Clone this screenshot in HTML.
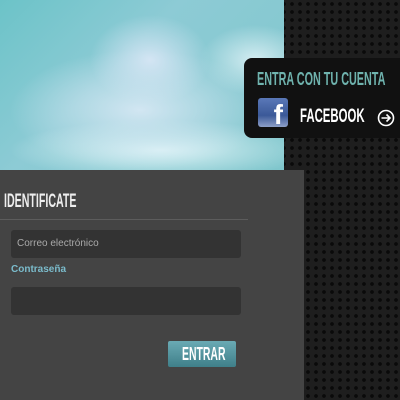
<!DOCTYPE html><html><head><style>
body{margin:0;width:400px;height:400px;overflow:hidden;position:relative;background:#1c1c1c;font-family:"Liberation Sans",sans-serif}
.tex{position:absolute;left:280px;top:0;width:120px;height:400px;background-color:#1e1e1e;background-image:radial-gradient(circle,#0a0a0a 1.6px,transparent 2.2px);background-size:8px 8px}
.sky{position:absolute;left:0;top:0;width:284px;height:170px;background:
radial-gradient(ellipse 60px 45px at 150px 60px,rgba(215,230,245,.95),transparent 100%),
radial-gradient(ellipse 130px 60px at 140px 110px,rgba(210,230,242,1),transparent 100%),
radial-gradient(ellipse 55px 35px at 255px 60px,rgba(220,240,245,.9),transparent 100%),
radial-gradient(ellipse 150px 30px at 160px 150px,rgba(225,245,248,.95),transparent 100%),
linear-gradient(135deg,#6cc3c8 0%,#8dcbd5 40%,#7fc6cc 100%)}
.box{position:absolute;left:244px;top:58px;width:160px;height:80px;background:#111;border-radius:8px 0 0 8px}
.t1{position:absolute;left:257px;top:69px;color:#6fb3ae;font-weight:bold;font-size:18px;transform:scaleX(.6);transform-origin:left;white-space:nowrap}
.fb{position:absolute;left:258px;top:98px;width:30px;height:29px;border-radius:3px;background:linear-gradient(#5a78b8,#3b5998 60%,#8ea0c8);color:#fff;font-weight:bold;font-size:28px;text-align:right;line-height:34px;box-sizing:border-box;padding-right:5px;overflow:hidden}
.t2{position:absolute;left:300px;top:106px;color:#fff;font-weight:bold;font-size:19px;transform:scaleX(.6);transform-origin:left;white-space:nowrap}
.arr{position:absolute;left:377px;top:109px}
.panel{position:absolute;left:0;top:170px;width:304px;height:230px;background:#444}
.h{position:absolute;left:4px;top:191px;color:#eee;font-weight:bold;font-size:19px;transform:scaleX(.56);transform-origin:left;white-space:nowrap}
.line{position:absolute;left:0;top:219px;width:248px;height:1px;background:#5c5c5c}
.in{position:absolute;left:11px;width:230px;height:28px;background:#333;border-radius:3px}
.ph{position:absolute;left:17px;top:238px;color:#aaa;font-size:10px}
.lab{position:absolute;left:11px;top:264px;color:#7bbccc;font-weight:bold;font-size:10px}
.btn{position:absolute;left:168px;top:341px;width:68px;height:26px;background:linear-gradient(#6aaab4,#3f7f89);border-radius:2px;color:#fff;font-weight:bold;font-size:18px;line-height:27px;overflow:hidden}
.btn span{position:absolute;left:14px;transform:scaleX(.58);transform-origin:left;white-space:nowrap}
</style></head><body>
<div class="tex"></div>
<div class="sky"></div>
<div class="box"></div>
<div class="t1">ENTRA CON TU CUENTA</div>
<div class="fb">f</div>
<div class="t2">FACEBOOK</div>
<svg class="arr" width="18" height="18" viewBox="0 0 18 18"><circle cx="9" cy="9" r="7.5" fill="none" stroke="#fff" stroke-width="1.6"/><path d="M4.5 9H13M9.5 5.5L13 9L9.5 12.5" fill="none" stroke="#fff" stroke-width="1.6"/></svg>
<div class="panel"></div>
<div class="h">IDENTIFICATE</div>
<div class="line"></div>
<div class="in" style="top:230px"></div>
<div class="ph">Correo electrónico</div>
<div class="lab">Contraseña</div>
<div class="in" style="top:287px"></div>
<div class="btn"><span>ENTRAR</span></div>
</body></html>
